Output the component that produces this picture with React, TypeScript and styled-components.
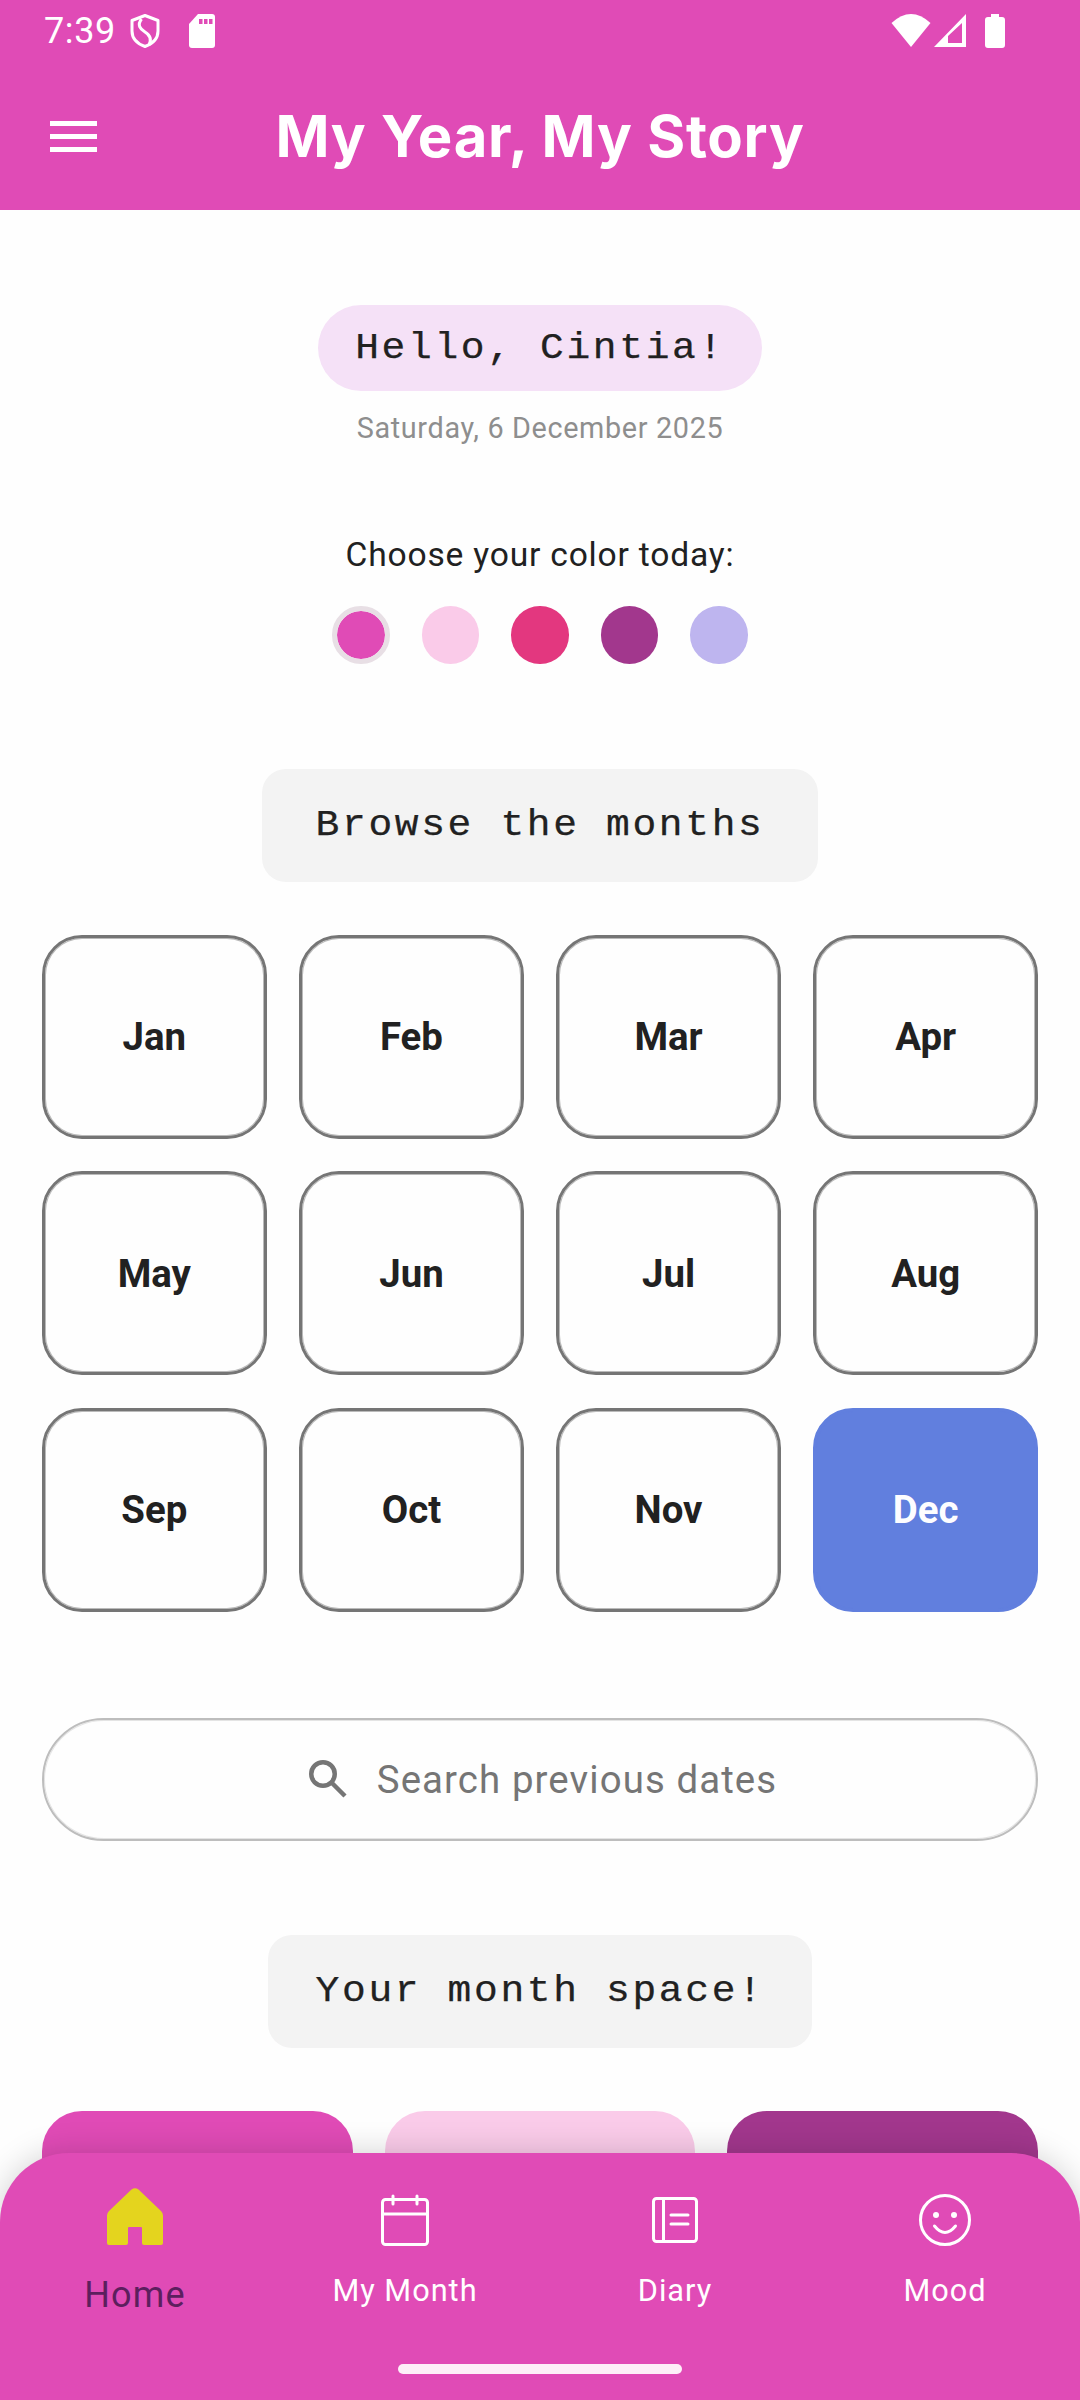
import React from "react";
import styled, { createGlobalStyle } from "styled-components";

const PINK = "#e04bb6";

const Global = createGlobalStyle`
  html, body { margin: 0; padding: 0; background: #fefefe; }
  * { box-sizing: border-box; }
`;

const Screen = styled.div`
  position: relative;
  width: 1080px;
  height: 2400px;
  overflow: hidden;
  background: #fefefe;
  font-family: Roboto, "Liberation Sans", sans-serif;
  color: #212121;
  display: flex;
  flex-direction: column;
`;

const Header = styled.header`
  flex: none;
  height: 210px;
  background: ${PINK};
  color: #fff;
  display: flex;
  flex-direction: column;
`;

const StatusBar = styled.div`
  height: 64px;
  padding: 14px 75px 0 44px;
  display: flex;
  align-items: flex-start;
  justify-content: space-between;
`;

const StatusGroup = styled.div`
  display: flex;
  align-items: flex-start;
`;

const Clock = styled.span`
  font-size: 36px;
  line-height: 34px;
  width: 86px;
  letter-spacing: 0.6px;
`;

const StatusIcon = styled.svg<{ $gap?: number }>`
  display: block;
  flex: none;
  margin-right: ${(p) => p.$gap ?? 0}px;
`;

const AppBar = styled.div`
  position: relative;
  flex: 1;
  display: flex;
  align-items: center;
  justify-content: center;
`;

const MenuIcon = styled.svg`
  position: absolute;
  left: 50px;
  top: 57px;
`;

const Title = styled.h1`
  margin: -2px 0 0;
  font-family: Inter, "Liberation Sans", sans-serif;
  font-weight: 700;
  font-size: 58px;
  line-height: 72px;
  letter-spacing: 0.75px;
`;

const Main = styled.main`
  flex: 1;
  padding: 95px 42px 0;
  display: flex;
  flex-direction: column;
  align-items: center;
`;

const Greeting = styled.div`
  width: 444px;
  height: 86px;
  border-radius: 43px;
  background: #f5e1f7;
  display: flex;
  align-items: center;
  justify-content: center;
  color: #212121;
`;

const MonoText = styled.span`
  display: inline-block;
  font-family: "Liberation Mono", monospace;
  font-size: 36px;
  letter-spacing: 2.4px;
  white-space: pre;
  transform: scaleX(1.1);
  -webkit-text-stroke: 0.25px #212121;
`;

const DateText = styled.div`
  margin-top: 21px;
  font-size: 28.8px;
  line-height: 32px;
  letter-spacing: 0.65px;
  color: #8e8e8e;
`;

const ChooseText = styled.div`
  margin-top: 92px;
  font-size: 33.6px;
  line-height: 38px;
  letter-spacing: 0.8px;
  color: #212121;
`;

const Swatches = styled.div`
  margin-top: 32px;
  display: flex;
  gap: 32px;
`;

const Swatch = styled.div<{ $color: string; $selected?: boolean }>`
  width: 57.5px;
  height: 57.5px;
  border-radius: 50%;
  background: ${(p) => p.$color};
  ${(p) => (p.$selected ? "border: 5px solid #e8dfe5; background-clip: padding-box;" : "")}
`;

const SectionPill = styled.div<{ $top: number; $width: number }>`
  margin-top: ${(p) => p.$top}px;
  width: ${(p) => p.$width}px;
  height: 113px;
  flex: none;
  border-radius: 24px;
  background: #f3f3f3;
  display: flex;
  align-items: center;
  justify-content: center;
  color: #212121;
`;

const MonthGrid = styled.div`
  margin-top: 53px;
  width: 100%;
  display: grid;
  grid-template-columns: repeat(4, 1fr);
  grid-auto-rows: 204px;
  gap: 32.5px 32.4px;
`;

const MonthCard = styled.div<{ $active?: boolean }>`
  border-radius: 40px;
  border: 3px solid ${(p) => (p.$active ? "#617fde" : "#757575")};
  box-shadow: inset 0 0 0 1px ${(p) => (p.$active ? "#617fde" : "rgba(117, 117, 117, 0.5)")};
  background: ${(p) => (p.$active ? "#617fde" : "transparent")};
  color: ${(p) => (p.$active ? "#fdfdff" : "#212121")};
  display: flex;
  align-items: center;
  justify-content: center;
  font-size: 38.4px;
  font-weight: 700;
`;

const SearchBox = styled.div`
  margin-top: 106px;
  flex: none;
  width: 100%;
  height: 123px;
  border-radius: 62px;
  border: 2px solid #bdbdbd;
  box-shadow: inset 0 0 0 1px rgba(189, 189, 189, 0.4);
  display: flex;
  align-items: center;
  justify-content: center;
  gap: 30px;
  padding-left: 6px;
  color: #757575;
  font-size: 38.4px;
  letter-spacing: 1.1px;
`;

const CardRow = styled.div`
  margin-top: 63px;
  flex: none;
  width: 100%;
  display: grid;
  grid-template-columns: repeat(3, 1fr);
  gap: 32px;
`;

const SpaceCard = styled.div<{ $color: string }>`
  height: 200px;
  border-radius: 40px;
  background: ${(p) => p.$color};
`;

const BottomNav = styled.nav`
  position: absolute;
  left: 0;
  right: 0;
  bottom: 0;
  height: 247px;
  background: ${PINK};
  border-radius: 69px 69px 0 0;
  box-shadow: 0 0 32px rgba(0, 0, 0, 0.18);
  display: grid;
  grid-template-columns: repeat(4, 1fr);
  align-items: start;
`;

const NavItem = styled.div<{ $active?: boolean }>`
  height: 172px;
  padding-top: ${(p) => (p.$active ? 35 : 38)}px;
  display: flex;
  flex-direction: column;
  align-items: center;
  color: ${(p) => (p.$active ? "#5c1f5e" : "#fff")};
`;

const NavIconBox = styled.div`
  height: 57px;
  display: flex;
  align-items: center;
  justify-content: center;
`;

const NavLabel = styled.div<{ $active?: boolean }>`
  margin-top: ${(p) => (p.$active ? 28 : 24)}px;
  font-size: ${(p) => (p.$active ? 36 : 30.7)}px;
  line-height: ${(p) => (p.$active ? 44 : 38)}px;
  letter-spacing: ${(p) => (p.$active ? 1.2 : 1)}px;
`;

const HomeIndicator = styled.div`
  position: absolute;
  left: 398px;
  bottom: 26px;
  width: 284px;
  height: 10px;
  border-radius: 5px;
  background: #fdeff8;
`;

const months = ["Jan", "Feb", "Mar", "Apr", "May", "Jun", "Jul", "Aug", "Sep", "Oct", "Nov", "Dec"];
const colors = ["#e04bb6", "#facbe9", "#e3377f", "#a2378d", "#beb5ef"];

export default function App() {
  return (
    <Screen>
      <Global />
      <Header>
        <StatusBar>
          <StatusGroup>
            <Clock>7:39</Clock>
            <StatusIcon $gap={29} width="30" height="34" viewBox="0 0 30 34" fill="none" stroke="#fff" strokeWidth="3">
              <path d="M15 1.5 L28 6.5 V17 C28 25 22 30 15 32.5 C8 30 2 25 2 17 V6.5 Z" strokeLinejoin="round" />
              <path d="M11.5 5 C7 11 10 15 15 18 C20 21 22 25 19 31" />
            </StatusIcon>
            <StatusIcon width="26" height="34" viewBox="0 0 26 34">
              <path d="M9 0 H23 Q26 0 26 3 V31 Q26 34 23 34 H3 Q0 34 0 31 V10 Z" fill="#fff" />
              <rect x="10" y="5" width="3.5" height="5" fill={PINK} />
              <rect x="15" y="5" width="3.5" height="5" fill={PINK} />
              <rect x="20" y="5" width="3.5" height="5" fill={PINK} />
            </StatusIcon>
          </StatusGroup>
          <StatusGroup>
            <StatusIcon $gap={3} width="40" height="33" viewBox="0 0 40 33">
              <path d="M20 33 L0.5 9 Q20 -9 39.5 9 Z" fill="#fff" />
            </StatusIcon>
            <StatusIcon $gap={19} width="32" height="33" viewBox="0 0 32 33">
              <path fillRule="evenodd" d="M32 0 V33 H0 Z M28 9 L14 22 V29 H28 Z" fill="#fff" />
            </StatusIcon>
            <StatusIcon width="20" height="34" viewBox="0 0 20 34">
              <path d="M6 0 H14 V3 H17 Q20 3 20 6 V31 Q20 34 17 34 H3 Q0 34 0 31 V6 Q0 3 3 3 H6 Z" fill="#fff" />
            </StatusIcon>
          </StatusGroup>
        </StatusBar>
        <AppBar>
          <MenuIcon width="47" height="31" viewBox="0 0 47 31" fill="#fff">
            <rect x="0" y="0" width="47" height="5" />
            <rect x="0" y="13" width="47" height="5" />
            <rect x="0" y="26" width="47" height="5" />
          </MenuIcon>
          <Title>My Year, My Story</Title>
        </AppBar>
      </Header>

      <Main>
        <Greeting>
          <MonoText>Hello, Cintia!</MonoText>
        </Greeting>
        <DateText>Saturday, 6 December 2025</DateText>
        <ChooseText>Choose your color today:</ChooseText>
        <Swatches>
          {colors.map((c, i) => (
            <Swatch key={c} $color={c} $selected={i === 0} />
          ))}
        </Swatches>
        <SectionPill $top={105} $width={556}>
          <MonoText>Browse the months</MonoText>
        </SectionPill>
        <MonthGrid>
          {months.map((m) => (
            <MonthCard key={m} $active={m === "Dec"}>{m}</MonthCard>
          ))}
        </MonthGrid>
        <SearchBox>
          <svg width="38" height="38" viewBox="0 0 38 38" fill="none" stroke="#757575" strokeWidth="4.5">
            <circle cx="14" cy="14" r="11.75" />
            <line x1="22.5" y1="22.5" x2="36" y2="36" />
          </svg>
          <span>Search previous dates</span>
        </SearchBox>
        <SectionPill $top={94} $width={544}>
          <MonoText>Your month space!</MonoText>
        </SectionPill>
        <CardRow>
          <SpaceCard $color="#e04bb6" />
          <SpaceCard $color="#facbe9" />
          <SpaceCard $color="#a2378d" />
        </CardRow>
      </Main>

      <BottomNav>
        <NavItem $active>
          <NavIconBox>
            <svg width="56" height="57" viewBox="0 0 56 57">
              <path
                d="M24.5 1.5 Q28 -1 31.5 1.5 L54 23 Q56 25 56 27.5 V55 Q56 57 54 57 H37 Q35 57 35 55 V40 Q35 39 34 39 H22 Q21 39 21 40 V55 Q21 57 19 57 H2 Q0 57 0 55 V27.5 Q0 25 2 23 Z"
                fill="#e4d41e"
              />
            </svg>
          </NavIconBox>
          <NavLabel $active>Home</NavLabel>
        </NavItem>
        <NavItem>
          <NavIconBox>
            <svg width="48" height="52" viewBox="0 0 48 52" fill="none" stroke="#fff" strokeWidth="3" strokeLinecap="round">
              <rect x="1.5" y="5.5" width="45" height="45" rx="3" />
              <line x1="1.5" y1="20" x2="46.5" y2="20" />
              <line x1="12" y1="2" x2="12" y2="10" />
              <line x1="36" y1="2" x2="36" y2="10" />
            </svg>
          </NavIconBox>
          <NavLabel>My Month</NavLabel>
        </NavItem>
        <NavItem>
          <NavIconBox>
            <svg width="46" height="46" viewBox="0 0 46 46" fill="none" stroke="#fff" strokeWidth="3" strokeLinecap="round">
              <rect x="1.5" y="1.5" width="43" height="43" rx="3" />
              <line x1="11.5" y1="1.5" x2="11.5" y2="44.5" />
              <line x1="19" y1="18" x2="36" y2="18" />
              <line x1="19" y1="27" x2="36" y2="27" />
            </svg>
          </NavIconBox>
          <NavLabel>Diary</NavLabel>
        </NavItem>
        <NavItem>
          <NavIconBox>
            <svg width="52" height="52" viewBox="0 0 52 52" fill="none" stroke="#fff" strokeWidth="3" strokeLinecap="round">
              <circle cx="26" cy="26" r="24.5" />
              <circle cx="17" cy="21" r="3" fill="#fff" stroke="none" />
              <circle cx="35" cy="21" r="3" fill="#fff" stroke="none" />
              <path d="M15.5 32 Q26 45 36.5 32" />
            </svg>
          </NavIconBox>
          <NavLabel>Mood</NavLabel>
        </NavItem>
        <HomeIndicator />
      </BottomNav>
    </Screen>
  );
}
